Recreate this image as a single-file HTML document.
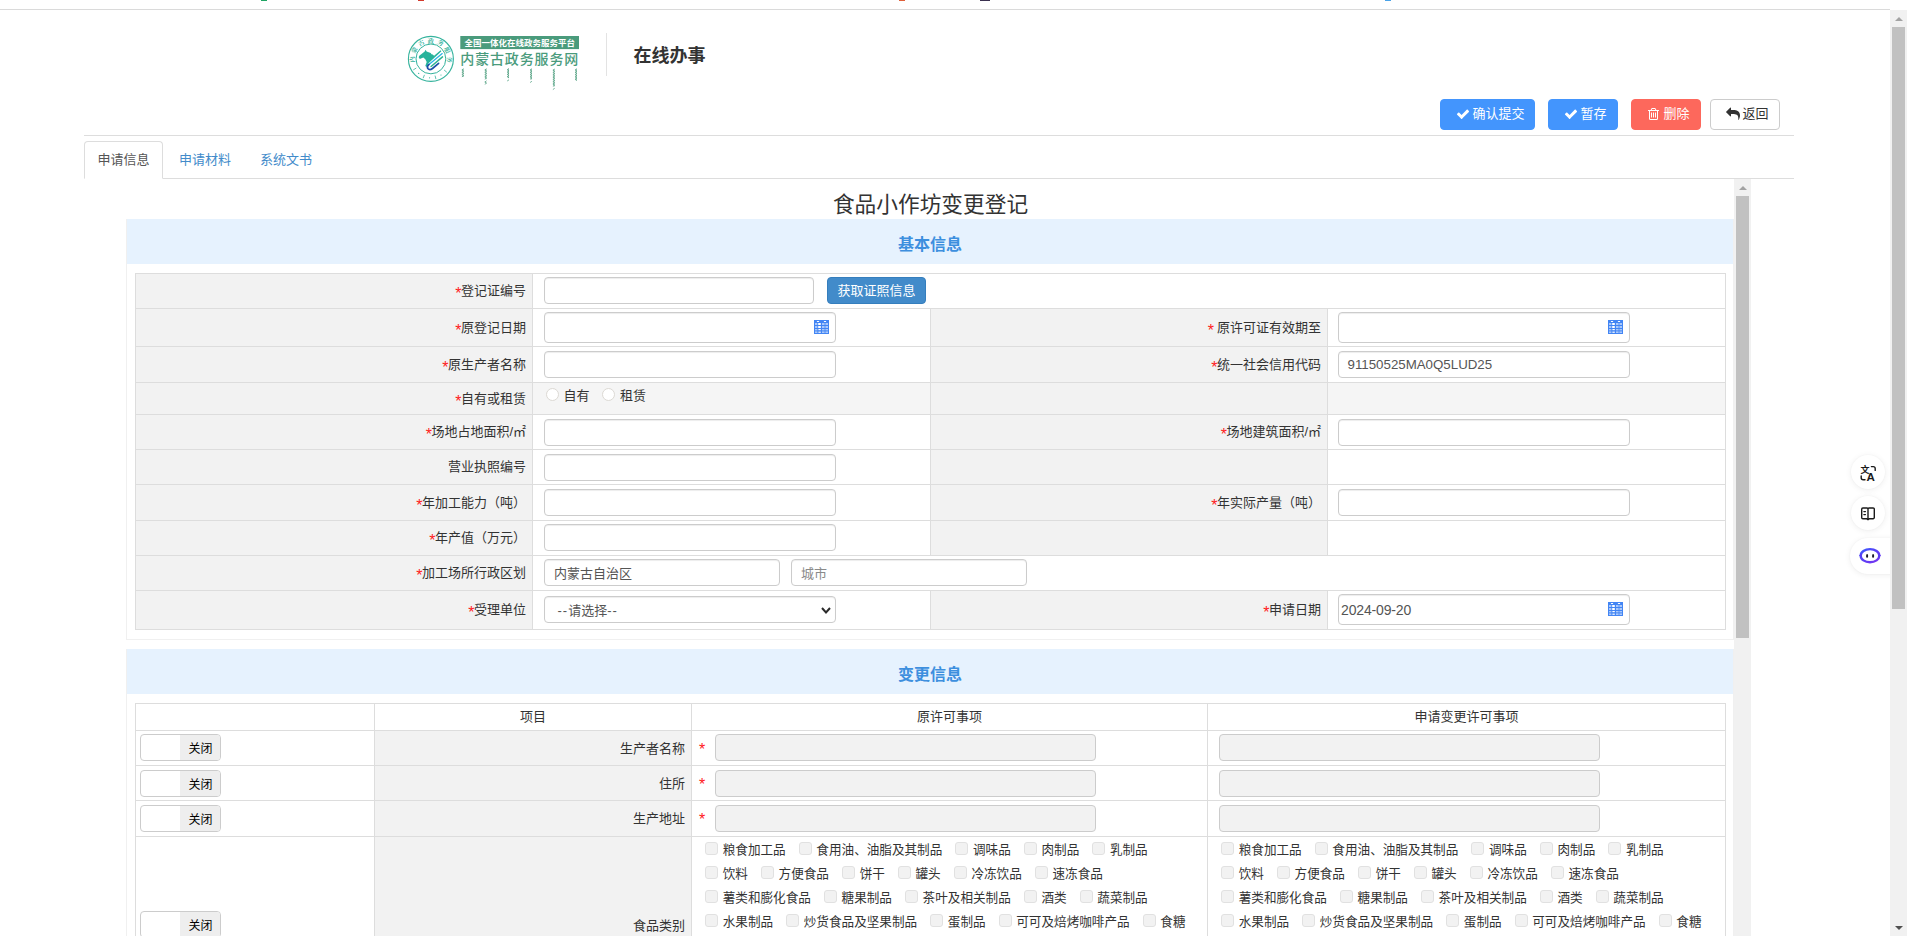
<!DOCTYPE html>
<html lang="zh-CN">
<head>
<meta charset="utf-8">
<title>在线办事 - 食品小作坊变更登记</title>
<style>
*{box-sizing:border-box;}
html,body{margin:0;padding:0;}
body{width:1907px;height:936px;overflow:hidden;position:relative;background:#fff;
 font-family:"Liberation Sans","Noto Sans CJK SC",sans-serif;font-size:13px;color:#333;line-height:1.42857;}
.abs{position:absolute;}
/* top strip */
#topline{left:0;top:9px;width:1890px;height:1px;background:#dadada;}
/* outer scrollbar */
#osb{left:1890px;top:10px;width:17px;height:926px;background:#f1f1f1;}
#osb .thumb{position:absolute;left:2px;top:17px;width:13px;height:582px;background:#c1c1c1;}
.arr-up{position:absolute;width:0;height:0;border-left:4px solid transparent;border-right:4px solid transparent;border-bottom:4px solid #a3a3a3;}
.arr-dn{position:absolute;width:0;height:0;border-left:4px solid transparent;border-right:4px solid transparent;border-top:4px solid #505050;}
/* header */
#logo{left:400px;top:30px;width:190px;height:66px;}
#hdiv{left:606px;top:33px;width:1px;height:43px;background:#e3e3e3;}
#htitle{left:633.5px;top:43px;font-size:18px;font-weight:bold;color:#333;line-height:26px;white-space:nowrap;}
/* buttons */
.btn{position:absolute;top:99px;height:31px;border-radius:4px;color:#fff;font-size:13px;line-height:27px;white-space:nowrap;border:1px solid transparent;}
.btn svg{position:absolute;}
.btn span{position:absolute;top:0;}
.b-blue{background:#4395fd;border-color:#4395fd;}
.b-red{background:#fd685c;border-color:#fd685c;}
.b-def{background:#fff;border-color:#ccc;color:#333;}
.hr{left:84px;width:1710px;height:1px;background:#ddd;}
/* tabs */
.tab{position:absolute;top:141px;height:38px;line-height:36px;font-size:13px;color:#428bca;white-space:nowrap;}
.tab.act{left:84px;width:79px;border:1px solid #ddd;border-bottom-color:#fff;border-radius:4px 4px 0 0;color:#555;background:#fff;text-align:center;}
/* scroll area */
#scroll{left:84px;top:179px;width:1667px;height:757px;overflow:hidden;}
#isb{position:absolute;left:1650px;top:0;width:17px;height:757px;background:#f1f1f1;}
#isb .thumb{position:absolute;left:2px;top:17px;width:13px;height:442px;background:#c1c1c1;}
#ftitle{position:absolute;left:43px;top:0;width:1607px;text-align:center;font-size:21.7px;line-height:30px;top:11px;color:#333;}
.panel{position:absolute;left:42px;width:1608px;border:1px solid #f0f0f0;background:#fff;}
.phead{position:absolute;left:0;top:-1px;width:1606px;height:45px;background:#e6f2fe;text-align:center;font-size:16px;font-weight:bold;color:#3d8fde;line-height:52px;}
table{border-collapse:collapse;table-layout:fixed;position:absolute;left:8px;width:1591px;}
td,th{border:1px solid #ddd;padding:0;font-weight:normal;vertical-align:middle;position:relative;}
td.l{background:#f2f2f2;text-align:right;padding-right:6px;padding-top:1px;white-space:nowrap;}
.r{color:#ff2020;font-size:16px;line-height:0;position:relative;top:4.1px;margin-right:-0.6px;font-weight:normal;}
tr.hov td{background:#f5f5f5;}
tr.hov td.l{background:#f2f2f2;}
.inp{position:absolute;left:11px;height:27px;border:1px solid #ccc;border-radius:4px;background:#fff;color:#555;font-size:13px;line-height:25px;padding-left:9px;white-space:nowrap;box-shadow:inset 0 1px 1px rgba(0,0,0,.075);}
.inp.dis{background:#f2f2f2;box-shadow:none;}
.cal{position:absolute;right:6px;top:7px;width:15px;height:14px;}

td.v{padding:0 0 0 11px;vertical-align:top;}
tr.m4 .inp{margin-top:4px;}
td.v4{padding-left:10px;}
.inp{position:relative;left:0;display:block;width:292px;height:27px;line-height:27px;margin-top:3px;}
.inp.date{height:31px;line-height:31px;padding-left:2px;font-size:14px;letter-spacing:-0.15px;}
.inp.ph{color:#8a8a8a;}
.gbtn{position:absolute;left:294px;top:3px;width:99px;height:27px;border-radius:4px;background:#428bca;border:1px solid #357ebd;color:#fff;font-size:13px;line-height:25px;text-align:center;}
.radio{position:absolute;top:5px;width:13px;height:13px;border-radius:50%;border:1px solid #dcd9d4;background:#fff;}
.rl{position:absolute;top:3px;line-height:19px;}
.chev{position:absolute;right:4px;top:9.5px;width:10px;height:7px;overflow:visible;}
.hy{letter-spacing:1px;}

th{text-align:center;font-size:13px;color:#333;}
td.s{padding-left:4px;}
.t2 td.l{padding-top:2px;}
td.w,td.w2{vertical-align:top;}
.sw{position:relative;width:81px;height:27px;border:1px solid #ccc;border-radius:4px;background:#fff;overflow:hidden;}
.sw span{position:absolute;left:39px;top:0;width:41px;height:25px;background:#eee;color:#000;font-size:12px;line-height:28.5px;text-align:center;}
td.w .inp,td.w2 .inp{width:381px;}
td.w{padding-left:23px;}
td.w2{padding-left:11px;}
.r.st{position:absolute;left:7px;top:10.6px;font-size:16px;line-height:16px;margin:0;}
td.c{vertical-align:top;padding:1px 0 0 13px;font-size:12.6px;line-height:24px;white-space:nowrap;}
.cb{display:inline-block;width:13px;height:13px;border:1px solid #e1e1e1;border-radius:3px;background:#f2f2f2;vertical-align:-1px;margin-right:4.7px;}
.ct{margin-right:13px;}
.fl{background:#fff;box-shadow:0 1px 6px rgba(0,0,0,.07),0 0 2px rgba(0,0,0,.04);}
#osb{z-index:5;}
</style>
</head>
<body>
<svg width="0" height="0" style="position:absolute"><defs>
<g id="calico"><rect width="15" height="14" fill="#4285f4"/>
<g fill="#a9c8fb"><rect x="1" y="3" width="2.4" height="2"/><rect x="1" y="6" width="2.4" height="2"/><rect x="1" y="9" width="2.4" height="1.4"/><rect x="1" y="11.4" width="2.4" height="1.6"/>
<rect x="8" y="3" width="2.6" height="2"/><rect x="8" y="6" width="2.6" height="2"/><rect x="8" y="9" width="2.6" height="1.4"/><rect x="8" y="11.4" width="2.6" height="1.6"/>
<rect x="11.4" y="3" width="2.6" height="2"/><rect x="11.4" y="6" width="2.6" height="2"/><rect x="11.4" y="9" width="2.6" height="1.4"/><rect x="11.4" y="11.4" width="2.6" height="1.6"/></g>
<g fill="#fff"><rect x="4.2" y="3" width="2.6" height="2"/><rect x="4.2" y="6" width="2.6" height="2"/><rect x="4.4" y="9" width="2.4" height="1.2"/><rect x="4.4" y="11.6" width="2.4" height="1.2"/><rect x="2.8" y="1" width="2.4" height="1" rx=".5"/><rect x="9.8" y="1" width="2.4" height="1" rx=".5"/></g>
</g><path id="i-check" transform="scale(1,-1)" d="M1671 970C1671 995 1661 1020 1643 1038L1507 1174C1489 1192 1464 1202 1439 1202C1414 1202 1389 1192 1371 1174L715 517L421 812C403 830 378 840 353 840C328 840 303 830 285 812L149 676C131 658 121 633 121 608C121 583 131 558 149 540L511 178L647 42C665 24 690 14 715 14C740 14 765 24 783 42L919 178L1643 902C1661 920 1671 945 1671 970Z"/>
<path id="i-trash" transform="scale(1,-1)" d="M512 800C512 818 498 832 480 832H416C398 832 384 818 384 800V224C384 206 398 192 416 192H480C498 192 512 206 512 224ZM768 800C768 818 754 832 736 832H672C654 832 640 818 640 800V224C640 206 654 192 672 192H736C754 192 768 206 768 224ZM1024 800C1024 818 1010 832 992 832H928C910 832 896 818 896 800V224C896 206 910 192 928 192H992C1010 192 1024 206 1024 224ZM1152 76C1152 28 1125 0 1120 0H288C283 0 256 28 256 76V1024H1152V76ZM480 1152 529 1269C532 1273 540 1279 546 1280H863C868 1279 877 1273 880 1269L928 1152ZM1408 1120C1408 1138 1394 1152 1376 1152H1067L997 1319C977 1368 917 1408 864 1408H544C491 1408 431 1368 411 1319L341 1152H32C14 1152 0 1138 0 1120V1056C0 1038 14 1024 32 1024H128V72C128 -38 200 -128 288 -128H1120C1208 -128 1280 -34 1280 76V1024H1376C1394 1024 1408 1038 1408 1056Z"/>
<path id="i-reply" transform="scale(1,-1)" d="M1792 416C1792 528 1781 643 1739 749C1600 1094 1192 1152 864 1152H640V1408C640 1443 611 1472 576 1472C559 1472 543 1465 531 1453L19 941C7 929 0 913 0 896C0 879 7 863 19 851L531 339C543 327 559 320 576 320C611 320 640 349 640 384V640H864C1295 640 1578 557 1578 80C1578 39 1576 -2 1573 -43C1572 -59 1568 -77 1568 -93C1568 -112 1580 -128 1600 -128C1614 -128 1621 -121 1628 -111C1643 -90 1654 -58 1665 -35C1722 93 1792 276 1792 416Z"/>
</defs></svg>
<div class="abs" style="left:261px;top:0;width:6px;height:1px;background:#1fa463"></div><div class="abs" style="left:418px;top:0;width:6px;height:1px;background:#d33a2c"></div><div class="abs" style="left:899px;top:0;width:6px;height:1px;background:#e0603a"></div><div class="abs" style="left:980px;top:0;width:10px;height:1px;background:#3b3150"></div><div class="abs" style="left:1385px;top:0;width:6px;height:1px;background:#4aa3e8"></div>
<div id="topline" class="abs"></div>
<div id="osb" class="abs"><div class="arr-up" style="left:4.5px;top:7px"></div><div class="thumb"></div><div class="arr-dn" style="left:4.5px;top:916px"></div></div>

<svg id="logo" class="abs" width="190" height="66" viewBox="0 0 190 66" style="overflow:visible">
<title>ᠥᠪᠥᠷ ᠮᠣᠩᠭᠣᠯ ᠤᠨ ᠵᠠᠰᠠᠭ ᠤᠨ ᠠᠯᠪᠠᠨ ᠤ ᠦᠢᠯᠡᠴᠢᠯᠡᠭᠡᠨ ᠦ ᠲᠣᠣᠷ</title>
<g transform="translate(30.9,28.9)">
<circle r="22.5" fill="#fff" stroke="#35b39d" stroke-width="1.1"/>
<circle r="14.9" fill="none" stroke="#35b39d" stroke-width="1"/>
<text transform="rotate(268) translate(0,-16.3)" text-anchor="middle" font-size="6.2" font-weight="bold" fill="#35b39d" font-family="'Noto Serif CJK SC','Liberation Serif',serif">内</text><text transform="rotate(298) translate(0,-16.3)" text-anchor="middle" font-size="6.2" font-weight="bold" fill="#35b39d" font-family="'Noto Serif CJK SC','Liberation Serif',serif">蒙</text><text transform="rotate(329) translate(0,-16.3)" text-anchor="middle" font-size="6.2" font-weight="bold" fill="#35b39d" font-family="'Noto Serif CJK SC','Liberation Serif',serif">古</text><text transform="rotate(360) translate(0,-16.3)" text-anchor="middle" font-size="6.2" font-weight="bold" fill="#35b39d" font-family="'Noto Serif CJK SC','Liberation Serif',serif">政</text><text transform="rotate(391) translate(0,-16.3)" text-anchor="middle" font-size="6.2" font-weight="bold" fill="#35b39d" font-family="'Noto Serif CJK SC','Liberation Serif',serif">务</text><text transform="rotate(422) translate(0,-16.3)" text-anchor="middle" font-size="6.2" font-weight="bold" fill="#35b39d" font-family="'Noto Serif CJK SC','Liberation Serif',serif">服</text><text transform="rotate(452) translate(0,-16.3)" text-anchor="middle" font-size="6.2" font-weight="bold" fill="#35b39d" font-family="'Noto Serif CJK SC','Liberation Serif',serif">务</text>
<line x1="13.18" y1="11.06" x2="15.93" y2="13.37" stroke="#35b39d" stroke-width="0.8"/><circle cx="10.07" cy="16.11" r="0.6" fill="#35b39d"/><line x1="4.16" y1="16.69" x2="5.03" y2="20.18" stroke="#35b39d" stroke-width="0.8"/><circle cx="-1.33" cy="18.95" r="0.6" fill="#35b39d"/><line x1="-6.44" y1="15.95" x2="-7.79" y2="19.29" stroke="#35b39d" stroke-width="0.8"/><circle cx="-12.21" cy="14.55" r="0.6" fill="#35b39d"/><line x1="-14.59" y1="9.11" x2="-17.64" y2="11.02" stroke="#35b39d" stroke-width="0.8"/>
<path fill="#27b39b" d="M-5.3,-9.2 L-4.3,-7.5 L-0.2,-5.9 L0.6,-4.6 L1.8,-4.4 L3.2,-3.1 L9.7,-8.7 L10.5,-7.6 L-2.4,4.4 L-3.2,6.2 L-4.2,8.0 L-5.6,7.2 L-4.2,3.0 L-5.6,0.3 L-7.6,-1.5 L-11.1,0.1 L-12.2,-1.6 L-11.6,-3.2 L-6.2,-7.4 Z"/>
<line x1="-1.9" y1="5.5" x2="11.3" y2="-5.3" stroke="#2bb5e6" stroke-width="1.3" stroke-linecap="round"/>
<line x1="0.2" y1="7.6" x2="11.6" y2="-2.0" stroke="#2db391" stroke-width="1.5" stroke-linecap="round"/>
<path d="M7.7,4.4 L1.6,9.6 Q-1.4,11.8 -3.1,9.6 Q-4.3,7.6 -1.9,5.5" fill="none" stroke="#1d50a8" stroke-width="1.7" stroke-linecap="round"/>
</g>
<rect x="60.3" y="6" width="118.7" height="13.1" fill="#4a9b7c"/>
<text x="119.7" y="16" text-anchor="middle" font-size="8.5" font-weight="bold" fill="#fff">全国一体化在线政务服务平台</text>
<text x="60.3" y="34" font-size="14" font-weight="500" letter-spacing="0.85" fill="#4a9b7c">内蒙古政务服务网</text>

<polyline points="63.7,38.8 61.9,40.0 63.7,41.1 61.9,42.3 63.7,43.4 61.9,44.6 63.7,45.7 61.9,46.9" fill="none" stroke="#4a9b7c" stroke-width="0.85" stroke-opacity="0.9"/><line x1="63.1" y1="38.8" x2="63.1" y2="47.0" stroke="#4a9b7c" stroke-width="0.6" stroke-opacity="0.8"/><polyline points="86.6,38.8 84.8,40.0 86.6,41.1 84.8,42.3 86.6,43.4 84.8,44.6 86.6,45.7 84.8,46.9 86.6,48.0 84.8,49.2" fill="none" stroke="#4a9b7c" stroke-width="0.85" stroke-opacity="0.9"/><polyline points="86.6,50.8 84.8,52.0 86.6,53.1 84.8,54.3" fill="none" stroke="#4a9b7c" stroke-width="0.85" stroke-opacity="0.9"/><line x1="86.0" y1="38.8" x2="86.0" y2="49.2" stroke="#4a9b7c" stroke-width="0.6" stroke-opacity="0.8"/><polyline points="109.0,38.6 107.2,39.8 109.0,40.9 107.2,42.1 109.0,43.2 107.2,44.4 109.0,45.5 107.2,46.7 109.0,47.8" fill="none" stroke="#4a9b7c" stroke-width="0.85" stroke-opacity="0.9"/><polyline points="109.0,49.8 107.2,51.0" fill="none" stroke="#4a9b7c" stroke-width="0.85" stroke-opacity="0.9"/><line x1="108.4" y1="38.6" x2="108.4" y2="48.2" stroke="#4a9b7c" stroke-width="0.6" stroke-opacity="0.8"/><polyline points="131.9,38.8 130.1,40.0 131.9,41.1 130.1,42.3 131.9,43.4 130.1,44.6 131.9,45.7 130.1,46.9 131.9,48.0 130.1,49.2" fill="none" stroke="#4a9b7c" stroke-width="0.85" stroke-opacity="0.9"/><polyline points="131.9,51.3 130.1,52.5" fill="none" stroke="#4a9b7c" stroke-width="0.85" stroke-opacity="0.9"/><line x1="131.3" y1="38.8" x2="131.3" y2="49.7" stroke="#4a9b7c" stroke-width="0.6" stroke-opacity="0.8"/><polyline points="154.7,39.0 152.9,40.2 154.7,41.3 152.9,42.5 154.7,43.6 152.9,44.8 154.7,45.9 152.9,47.1 154.7,48.2 152.9,49.4 154.7,50.5 152.9,51.7 154.7,52.8 152.9,54.0 154.7,55.1 152.9,56.3" fill="none" stroke="#4a9b7c" stroke-width="0.85" stroke-opacity="0.9"/><polyline points="154.7,58.3 152.9,59.5" fill="none" stroke="#4a9b7c" stroke-width="0.85" stroke-opacity="0.9"/><line x1="154.1" y1="39.0" x2="154.1" y2="56.7" stroke="#4a9b7c" stroke-width="0.6" stroke-opacity="0.8"/><polyline points="176.9,38.8 175.1,40.0 176.9,41.1 175.1,42.3 176.9,43.4 175.1,44.6 176.9,45.7 175.1,46.9 176.9,48.0 175.1,49.2 176.9,50.3" fill="none" stroke="#4a9b7c" stroke-width="0.85" stroke-opacity="0.9"/><line x1="176.3" y1="38.8" x2="176.3" y2="51.0" stroke="#4a9b7c" stroke-width="0.6" stroke-opacity="0.8"/></svg>
<div id="hdiv" class="abs"></div>
<div id="htitle" class="abs">在线办事</div>

<div class="btn b-blue" style="left:1440px;width:95px;"><svg style="left:14.75px;top:7px" width="14" height="14" viewBox="0 -1536 1792 1792" fill="#fff"><use href="#i-check"/></svg><span style="left:31.5px">确认提交</span></div>
<div class="btn b-blue" style="left:1548px;width:70px;"><svg style="left:15.0px;top:7px" width="14" height="14" viewBox="0 -1536 1792 1792" fill="#fff"><use href="#i-check"/></svg><span style="left:31.5px">暂存</span></div>
<div class="btn b-red" style="left:1631px;width:70px;"><svg style="left:16.2px;top:7px" width="11" height="14" viewBox="0 -1536 1408 1792" fill="#fff"><use href="#i-trash"/></svg><span style="left:31.5px">删除</span></div>
<div class="btn b-def" style="left:1710px;width:70px;"><svg style="left:14.7px;top:7px" width="14" height="14" viewBox="0 -1536 1792 1792" fill="#333"><use href="#i-reply"/></svg><span style="left:31.5px">返回</span></div>

<div class="abs hr" style="top:135px"></div>
<div class="abs hr" style="top:178px"></div>
<div class="tab act">申请信息</div>
<div class="tab" style="left:179px;top:142px">申请材料</div>
<div class="tab" style="left:260px;top:142px">系统文书</div>

<div id="scroll" class="abs">
 <div id="isb"><div class="arr-up" style="left:4.5px;top:7px"></div><div class="thumb"></div></div>
 <div id="ftitle">食品小作坊变更登记</div>

 <div class="panel" style="top:40px;height:421px;">
  <div class="phead">基本信息</div>
  <table style="top:53px;">
   <colgroup><col style="width:397px"><col style="width:398px"><col style="width:397px"><col style="width:398px"></colgroup>
   <tr style="height:35px"><td class="l"><span class="r">*</span>登记证编号</td><td colspan="3" class="v"><div class="inp" style="width:270px"></div><div class="gbtn">获取证照信息</div></td></tr>
   <tr style="height:38px"><td class="l"><span class="r">*</span>原登记日期</td><td class="v"><div class="inp date"><svg class="cal" viewBox="0 0 15 14"><use href="#calico"/></svg></div></td><td class="l"><span class="r">*</span> 原许可证有效期至</td><td class="v v4"><div class="inp date"><svg class="cal" viewBox="0 0 15 14"><use href="#calico"/></svg></div></td></tr>
   <tr style="height:36px" class="m4"><td class="l"><span class="r">*</span>原生产者名称</td><td class="v"><div class="inp"></div></td><td class="l"><span class="r">*</span>统一社会信用代码</td><td class="v v4"><div class="inp" style="font-size:13.3px;padding-left:8.5px;line-height:25.5px">91150525MA0Q5LUD25</div></td></tr>
   <tr style="height:32px" class="hov"><td class="l"><span class="r">*</span>自有或租赁</td><td class="v"><span class="radio" style="left:13px"></span><span class="rl" style="left:30.5px">自有</span><span class="radio" style="left:69px"></span><span class="rl" style="left:87px">租赁</span></td><td class="l"></td><td class="v v4"></td></tr>
   <tr style="height:35px" class="m4"><td class="l"><span class="r">*</span>场地占地面积/㎡</td><td class="v"><div class="inp"></div></td><td class="l"><span class="r">*</span>场地建筑面积/㎡</td><td class="v v4"><div class="inp"></div></td></tr>
   <tr style="height:35px" class="m4"><td class="l">营业执照编号</td><td class="v"><div class="inp"></div></td><td class="l"></td><td class="v v4"></td></tr>
   <tr style="height:36px" class="m4"><td class="l"><span class="r">*</span>年加工能力（吨）</td><td class="v"><div class="inp"></div></td><td class="l"><span class="r">*</span>年实际产量（吨）</td><td class="v v4"><div class="inp"></div></td></tr>
   <tr style="height:35px"><td class="l"><span class="r">*</span>年产值（万元）</td><td class="v"><div class="inp"></div></td><td class="l"></td><td class="v v4"></td></tr>
   <tr style="height:35px"><td class="l"><span class="r">*</span>加工场所行政区划</td><td colspan="3" class="v"><div class="inp" style="width:236px;float:left">内蒙古自治区</div><div class="inp ph" style="width:236px;float:left;margin-left:11px">城市</div></td></tr>
   <tr style="height:39px"><td class="l"><span class="r">*</span>受理单位</td><td class="v"><div class="inp sel" style="margin-top:5px;padding-left:12.5px"><span class="hy">--</span>请选择<span class="hy">--</span><svg class="chev" viewBox="0 0 10 7"><path d="M1 1l4 4.4 4-4.4" fill="none" stroke="#2a2a2a" stroke-width="2"/></svg></div></td><td class="l"><span class="r">*</span>申请日期</td><td class="v v4"><div class="inp date">2024-09-20<svg class="cal" viewBox="0 0 15 14"><use href="#calico"/></svg></div></td></tr>
  </table>
 </div>
 <!--PANEL1-->

 <div class="panel" style="top:470px;height:400px;border-bottom:none">
  <div class="phead">变更信息</div>
  <table class="t2" style="top:53px;">
   <colgroup><col style="width:239px"><col style="width:317px"><col style="width:516px"><col style="width:518px"></colgroup>
   <tr style="height:27px"><th></th><th>项目</th><th>原许可事项</th><th>申请变更许可事项</th></tr>
   <tr style="height:35px"><td class="s"><div class="sw" style="top:-0.5px"><span>关闭</span></div></td><td class="l">生产者名称</td><td class="w"><span class="r st">*</span><div class="inp dis"></div></td><td class="w2"><div class="inp dis"></div></td></tr>
   <tr style="height:35px" class="m4"><td class="s"><div class="sw" style="top:0.5px"><span>关闭</span></div></td><td class="l">住所</td><td class="w"><span class="r st">*</span><div class="inp dis"></div></td><td class="w2"><div class="inp dis"></div></td></tr>
   <tr style="height:36px" class="m4"><td class="s"><div class="sw"><span>关闭</span></div></td><td class="l">生产地址</td><td class="w"><span class="r st">*</span><div class="inp dis"></div></td><td class="w2"><div class="inp dis"></div></td></tr>
   <tr style="height:176px"><td class="s"><div class="sw"><span>关闭</span></div></td><td class="l" style="padding-top:4px">食品类别</td><td class="c"><span class="cb"></span><span class="ct">粮食加工品</span><span class="cb"></span><span class="ct">食用油、油脂及其制品</span><span class="cb"></span><span class="ct">调味品</span><span class="cb"></span><span class="ct">肉制品</span><span class="cb"></span><span class="ct">乳制品</span><br><span class="cb"></span><span class="ct">饮料</span><span class="cb"></span><span class="ct">方便食品</span><span class="cb"></span><span class="ct">饼干</span><span class="cb"></span><span class="ct">罐头</span><span class="cb"></span><span class="ct">冷冻饮品</span><span class="cb"></span><span class="ct">速冻食品</span><br><span class="cb"></span><span class="ct">薯类和膨化食品</span><span class="cb"></span><span class="ct">糖果制品</span><span class="cb"></span><span class="ct">茶叶及相关制品</span><span class="cb"></span><span class="ct">酒类</span><span class="cb"></span><span class="ct">蔬菜制品</span><br><span class="cb"></span><span class="ct">水果制品</span><span class="cb"></span><span class="ct">炒货食品及坚果制品</span><span class="cb"></span><span class="ct">蛋制品</span><span class="cb"></span><span class="ct">可可及焙烤咖啡产品</span><span class="cb"></span><span class="ct">食糖</span><br><span class="cb"></span><span class="ct">淀粉及淀粉制品</span><span class="cb"></span><span class="ct">糕点</span><span class="cb"></span><span class="ct">豆制品</span><span class="cb"></span><span class="ct">蜂产品</span><span class="cb"></span><span class="ct">其他食品</span></td><td class="c"><span class="cb"></span><span class="ct">粮食加工品</span><span class="cb"></span><span class="ct">食用油、油脂及其制品</span><span class="cb"></span><span class="ct">调味品</span><span class="cb"></span><span class="ct">肉制品</span><span class="cb"></span><span class="ct">乳制品</span><br><span class="cb"></span><span class="ct">饮料</span><span class="cb"></span><span class="ct">方便食品</span><span class="cb"></span><span class="ct">饼干</span><span class="cb"></span><span class="ct">罐头</span><span class="cb"></span><span class="ct">冷冻饮品</span><span class="cb"></span><span class="ct">速冻食品</span><br><span class="cb"></span><span class="ct">薯类和膨化食品</span><span class="cb"></span><span class="ct">糖果制品</span><span class="cb"></span><span class="ct">茶叶及相关制品</span><span class="cb"></span><span class="ct">酒类</span><span class="cb"></span><span class="ct">蔬菜制品</span><br><span class="cb"></span><span class="ct">水果制品</span><span class="cb"></span><span class="ct">炒货食品及坚果制品</span><span class="cb"></span><span class="ct">蛋制品</span><span class="cb"></span><span class="ct">可可及焙烤咖啡产品</span><span class="cb"></span><span class="ct">食糖</span><br><span class="cb"></span><span class="ct">淀粉及淀粉制品</span><span class="cb"></span><span class="ct">糕点</span><span class="cb"></span><span class="ct">豆制品</span><span class="cb"></span><span class="ct">蜂产品</span><span class="cb"></span><span class="ct">其他食品</span></td></tr>
  </table>
 </div>
 <!--PANEL2-->
</div>

<div class="abs fl" style="left:1851px;top:454.5px;width:34px;height:34px;border-radius:17px;">
<svg width="34" height="34" viewBox="0 0 34 34" style="position:absolute;left:0;top:0"><text x="9.6" y="18.3" font-size="9" font-weight="bold" fill="#1a1a1a">文</text><text x="15.6" y="25.6" font-size="11.6" font-weight="bold" fill="#1a1a1a" font-family="'Liberation Sans',sans-serif">A</text>
<path d="M20.4 11.6h1.8a2 2 0 0 1 2 2v1.8M14 24.8h-1.8a2 2 0 0 1-2-2v-1.8" fill="none" stroke="#1a1a1a" stroke-width="1.4" stroke-linecap="round"/></svg></div>
<div class="abs fl" style="left:1851px;top:496px;width:34px;height:34px;border-radius:17px;">
<svg width="34" height="34" viewBox="0 0 34 34" style="position:absolute;left:0;top:0"><path d="M10.7 13.2a1.2 1.2 0 0 1 1.2-1.2h4.1a1 1 0 0 1 1 1 1 1 0 0 1 1-1h4.1a1.2 1.2 0 0 1 1.2 1.2v8.3a1.2 1.2 0 0 1-1.2 1.2h-3.6l-1.5 1-1.5-1h-3.6a1.2 1.2 0 0 1-1.2-1.2zM17 13v9.6" fill="none" stroke="#1a1a1a" stroke-width="1.4" stroke-linejoin="round"/><path d="M12.9 15.6h1.5M12.9 18.6h1.5" stroke="#1a1a1a" stroke-width="1.4" stroke-linecap="round"/></svg></div>
<div class="abs fl" style="left:1850px;top:538px;width:60px;height:36px;border-radius:18px;">
<svg width="40" height="36" viewBox="0 0 40 36" style="position:absolute;left:0;top:0"><defs><linearGradient id="rg" x1="0" y1="0" x2="1" y2="1"><stop offset="0" stop-color="#3d5cff"/><stop offset="0.5" stop-color="#5a3df5"/><stop offset="1" stop-color="#7a35f0"/></linearGradient></defs>
<ellipse cx="20" cy="17.7" rx="9.3" ry="6.6" fill="#fff" stroke="url(#rg)" stroke-width="2.4"/><path d="M9.7 17.4l1.5-1.6v3.6zM30.3 17.4l-1.5-1.6v3.6z" fill="#5a3df5" stroke="#5a3df5" stroke-width="1" stroke-linejoin="round"/>
<ellipse cx="17.1" cy="17.9" rx="1.05" ry="1.9" fill="#1a1a2a"/><ellipse cx="23.1" cy="17.9" rx="1.05" ry="1.9" fill="#1a1a2a"/></svg></div>

</body>
</html>
